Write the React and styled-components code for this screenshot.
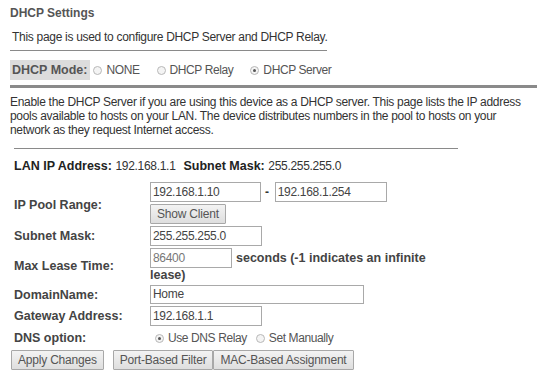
import React from 'react';
import styled, { createGlobalStyle } from 'styled-components';

const Global = createGlobalStyle`
  html, body {
    margin: 0;
    padding: 0;
    background: #fff;
  }
  body {
    font-family: Tahoma, "Liberation Sans", Arial, sans-serif;
    font-size: 12px;
    letter-spacing: -0.3px;
    color: #333;
  }
`;

const Page = styled.div`
  width: 537px;
  height: 380px;
  overflow: hidden;
  padding: 4px 0 0 10px;
  box-sizing: border-box;
`;

const Title = styled.div`
  font-weight: bold;
  font-size: 12px;
  letter-spacing: 0;
  color: #555;
  height: 18px;
  line-height: 18px;
`;

const Intro = styled.div`
  margin-top: 7px;
  padding-left: 2px;
  line-height: 16px;
`;

const Rule = styled.div`
  width: ${p => p.$w}px;
  height: ${p => p.$h || 1}px;
  background: #8a8a8a;
  margin: ${p => p.$m || '0'};
`;

const ModeRow = styled.div`
  display: flex;
  align-items: center;
  margin-top: 9px;
  height: 20px;
`;

const ModeLabel = styled.span`
  background: #dcdcdc;
  font-weight: bold;
  font-size: 12.5px;
  letter-spacing: 0;
  color: #555;
  padding: 2px 3px 2px 2px;
  line-height: 16px;
  margin-right: 3px;
`;

const RadioItem = styled.label`
  display: inline-flex;
  align-items: center;
  color: #555;
  letter-spacing: -0.4px;
  margin-right: ${p => p.$gap || 17}px;
`;

const Dot = styled.span`
  width: 9px;
  height: 9px;
  border-radius: 50%;
  border: 1px solid #b8b8b8;
  background: #f4f4f4;
  box-sizing: border-box;
  margin-right: 4px;
  display: inline-flex;
  align-items: center;
  justify-content: center;
  &::after {
    content: '';
    width: 3px;
    height: 3px;
    border-radius: 50%;
    background: ${p => (p.$on ? '#555' : 'transparent')};
  }
`;

const Para = styled.p`
  margin: 7px 0 0 0;
  line-height: 14px;
  width: 527px;
  white-space: nowrap;
`;

const InfoRow = styled.div`
  margin-top: 10px;
  padding-left: 4px;
  font-weight: bold;
  font-size: 12.5px;
  letter-spacing: 0;
  color: #222;
  span { font-weight: normal; color: #333; font-size: 12px; letter-spacing: -0.3px; }
  b { margin-left: 8px; }
`;

const Form = styled.div`
  display: grid;
  grid-template-columns: 136px auto;
  margin-top: 9px;
  padding-left: 4px;
  align-items: center;
  row-gap: 2px;
`;

const Label = styled.div`
  font-weight: bold;
  font-size: 12.5px;
  letter-spacing: 0;
  color: #444;
  padding-top: ${p => p.$top || 0}px;
`;

const Field = styled.div`
  display: flex;
  flex-wrap: wrap;
  align-items: center;
  padding-left: ${p => p.$pl || 0}px;
  height: ${p => (p.$h ? `${p.$h}px` : 'auto')};
`;

const Break = styled.div`
  flex-basis: 100%;
  height: ${p => p.$h || 0}px;
`;

const Input = styled.div`
  width: ${p => p.$w}px;
  height: ${p => p.$h || 20}px;
  border: 1px solid #a9a9a9;
  box-sizing: border-box;
  padding-left: 2px;
  line-height: ${p => (p.$h || 20) - 2}px;
  color: ${p => (p.$dim ? '#777' : '#444')};
  background: #fff;
`;

const Dash = styled.span`
  font-weight: bold;
  margin: 0 6px 0 4px;
`;

const Button = styled.button`
  font-family: inherit;
  font-size: 12px;
  letter-spacing: -0.2px;
  color: #555;
  height: 20px;
  padding: 0 6px;
  border: 1px solid #a8a8a8;
  border-radius: 1px;
  background: linear-gradient(#f3f3f3, #dedede);
  margin-right: ${p => p.$mr || 0}px;
  line-height: 16px;
`;

const Note = styled.span`
  font-weight: bold;
  font-size: 12.5px;
  letter-spacing: 0;
  color: #444;
  line-height: 15px;
  margin-left: ${p => (p.$flush ? 0 : 4)}px;
`;

const Buttons = styled.div`
  display: flex;
  margin-top: 2px;
  padding-left: 1px;
`;

export default function App() {
  return (
    <Page>
      <Global />
      <Title>DHCP Settings</Title>
      <Intro>This page is used to configure DHCP Server and DHCP Relay.</Intro>
      <Rule $w={317} $m="5px 0 0 0" />
      <ModeRow>
        <ModeLabel>DHCP Mode:</ModeLabel>
        <RadioItem><Dot />NONE</RadioItem>
        <RadioItem><Dot />DHCP Relay</RadioItem>
        <RadioItem><Dot $on />DHCP Server</RadioItem>
      </ModeRow>
      <Rule $w={527} $h={3} $m="5px 0 0 0" />
      <Para>
        Enable the DHCP Server if you are using this device as a DHCP server. This page lists the IP address<br />
        pools available to hosts on your LAN. The device distributes numbers in the pool to hosts on your<br />
        network as they request Internet access.
      </Para>
      <Rule $w={444} $m="11px 0 0 4px" />
      <InfoRow>
        LAN IP Address: <span>192.168.1.1</span>
        <b>Subnet Mask:</b> <span>255.255.255.0</span>
      </InfoRow>
      <Form>
        <Label $top={4}>IP Pool Range:</Label>
        <Field>
          <Input $w={111}>192.168.1.10</Input>
          <Dash>-</Dash>
          <Input $w={112}>192.168.1.254</Input>
          <Break $h={2} />
          <Button>Show Client</Button>
        </Field>
        <Label>Subnet Mask:</Label>
        <Field><Input $w={112}>255.255.255.0</Input></Field>
        <Label>Max Lease Time:</Label>
        <Field>
          <Input $w={82} $dim>86400</Input>
          <Note>seconds (-1 indicates an infinite</Note>
          <Break />
          <Note $flush>lease)</Note>
        </Field>
        <Label>DomainName:</Label>
        <Field><Input $w={214} $h={19}>Home</Input></Field>
        <Label>Gateway Address:</Label>
        <Field><Input $w={112}>192.168.1.1</Input></Field>
        <Label>DNS option:</Label>
        <Field $pl={5} $h={20}>
          <RadioItem $gap={9}><Dot $on />Use DNS Relay</RadioItem>
          <RadioItem><Dot />Set Manually</RadioItem>
        </Field>
      </Form>
      <Buttons>
        <Button $mr={9}>Apply Changes</Button>
        <Button>Port-Based Filter</Button>
        <Button>MAC-Based Assignment</Button>
      </Buttons>
    </Page>
  );
}
